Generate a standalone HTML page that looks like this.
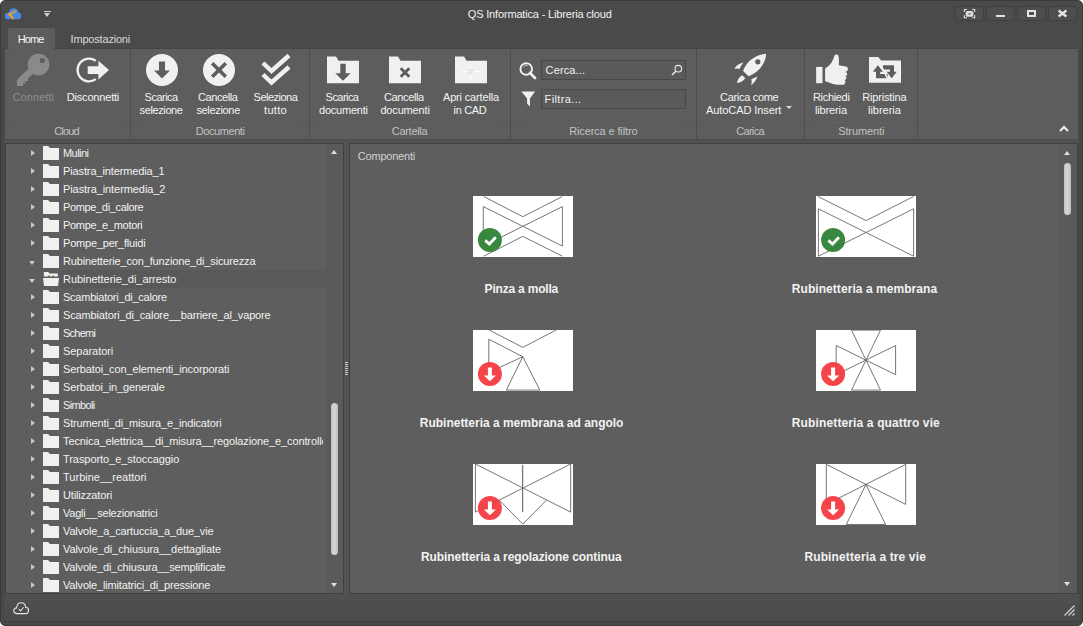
<!DOCTYPE html>
<html><head><meta charset="utf-8">
<style>
*{margin:0;padding:0;box-sizing:border-box}
html,body{width:1083px;height:626px;overflow:hidden;background:#fff}
body{font-family:"Liberation Sans",sans-serif;font-size:11px;color:#f0f0f0;position:relative}
.a{position:absolute}
.t{white-space:nowrap;line-height:13px}
svg{position:absolute;overflow:visible}
#win{left:0;top:0;width:1083px;height:626px;background:linear-gradient(#4a4a4a 0,#4a4a4a 48px,#474747 48px);border:1px solid #3a3a3a;border-radius:5px}
.tb{top:6px;width:29px;height:15px;border:1px solid #404040;border-radius:3px;background:#4e4e4e}
.gsep{top:49px;width:1px;height:90px;background:#4d4d4d}
.lsep{top:121px;height:2px;border-top:1px solid rgba(80,80,80,0.35);background:linear-gradient(90deg,rgba(100,100,100,0),#626262 12%,#626262 88%,rgba(100,100,100,0))}
.glab{top:125px;color:#c2c2c2;text-align:center}
.bl{top:91px;text-align:center;line-height:13px;color:#f4f4f4;white-space:nowrap}
.row{left:0;height:18px;width:320px}
.row .arr{position:absolute;left:31px;top:6px;width:0;height:0;border-top:3.5px solid transparent;border-bottom:3.5px solid transparent;border-left:4px solid #c9c9c9}
.row .arrd{position:absolute;left:29px;top:9px;width:0;height:0;border-left:3.5px solid transparent;border-right:3.5px solid transparent;border-top:4px solid #c9c9c9}
.row .fo{position:absolute;left:43px;top:2px;width:16px;height:14px}
.row .tx{position:absolute;left:63px;top:3px;color:#f2f2f2;white-space:nowrap;line-height:13px}
.item{width:240px;text-align:center}
.thumb{width:100px;height:61px;background:#fff}
.cap{font-weight:bold;font-size:12px;color:#f2f2f2;white-space:nowrap;text-align:center;width:300px}
</style></head><body>
<div id="win" class="a"></div>

<!-- QAT -->
<svg style="left:4px;top:7px" width="18" height="14" viewBox="0 0 18 14">
  <circle cx="9.6" cy="6" r="4.8" fill="#4a86de"/>
  <rect x="0.9" y="5.4" width="16.3" height="6.9" rx="3.4" fill="#4a86de"/>
  <path d="M5.7 7.5 L10 4.8" stroke="#f5a418" stroke-width="1.5" fill="none"/>
  <path d="M5.7 7.5 L9.6 11.8" stroke="#f5a418" stroke-width="1.9" fill="none"/>
  <circle cx="5.7" cy="7.5" r="1.6" fill="#f5a418"/>
  <circle cx="10.9" cy="4.3" r="1.1" fill="none" stroke="#e8a030" stroke-width="0.7"/>
</svg>
<div class="a" style="left:44px;top:11px;width:7px;height:1px;background:#d0d0d0"></div>
<div class="a" style="left:44px;top:13px;width:0;height:0;border-left:3.5px solid transparent;border-right:3.5px solid transparent;border-top:4px solid #d0d0d0"></div>

<!-- title -->


<!-- title buttons -->
<div class="a tb" style="left:955px"></div>
<div class="a tb" style="left:986px"></div>
<div class="a tb" style="left:1017px"></div>
<div class="a tb" style="left:1048px"></div>
<svg style="left:963px;top:8px" width="13" height="11" viewBox="0 0 13 11">
  <path d="M1.4 4 V1.5 H4 M9.2 1.5 H11.7 V4 M11.7 7.2 V9.7 H9.2 M4 9.7 H1.4 V7.2" stroke="#e4e4e4" stroke-width="1.1" fill="none"/>
  <rect x="2.7" y="3.1" width="7.7" height="5.6" rx="1.6" fill="#dedede"/>
  <rect x="5.3" y="5.4" width="2.6" height="1" fill="#4e4e4e"/>
</svg>
<div class="a" style="left:996px;top:15px;width:9px;height:2px;background:#e4e4e4"></div>
<div class="a" style="left:1027px;top:10px;width:9px;height:7px;border:2px solid #e4e4e4;border-radius:0.5px"></div>
<svg style="left:1057px;top:10px" width="11" height="7" viewBox="0 0 11 7">
  <path d="M1.6 0.5 L9.4 6.5 M9.4 0.5 L1.6 6.5" stroke="#e4e4e4" stroke-width="2.4"/>
</svg>

<!-- tabs -->
<div class="a" style="left:8px;top:28px;width:47px;height:22px;background:#5d5d5d;border-radius:2px 2px 0 0"></div>



<!-- ribbon -->
<div class="a" style="left:5px;top:49px;width:1073px;height:90px;background:#5d5d5d"></div>

<div class="a gsep" style="left:130px"></div>
<div class="a gsep" style="left:309px"></div>
<div class="a gsep" style="left:510px"></div>
<div class="a gsep" style="left:696px"></div>
<div class="a gsep" style="left:804px"></div>
<div class="a gsep" style="left:917px"></div>
<div class="a lsep" style="left:6px;width:124px"></div>
<div class="a lsep" style="left:131px;width:178px"></div>
<div class="a lsep" style="left:310px;width:200px"></div>
<div class="a lsep" style="left:511px;width:185px"></div>
<div class="a lsep" style="left:697px;width:107px"></div>
<div class="a lsep" style="left:805px;width:112px"></div>


<!-- Cloud group -->
<svg style="left:16px;top:53px" width="34" height="34" viewBox="0 0 34 34">
  <circle cx="22.5" cy="11.5" r="10.8" fill="#8a8a8a"/>
  <circle cx="26.3" cy="7.5" r="2.6" fill="#5d5d5d"/>
  <path d="M12 16 L1 27 V33 H7 V30.5 H9.5 V28 H12 V25.5 L18 19.5 Z" fill="#8a8a8a"/>
</svg>
<svg style="left:77px;top:56px" width="33" height="28" viewBox="0 0 33 28">
  <path d="M18.8 4.85 A11.4 11.4 0 1 0 18.8 23.15" stroke="#f0f0f0" stroke-width="2.3" fill="none"/>
  <path d="M10.7 10.3 H21.4 V4.7 L32 14.1 L21.4 23.5 V17.9 H10.7 Z" fill="#f0f0f0"/>
</svg>

<!-- Documenti group -->
<svg style="left:146px;top:54px" width="32" height="32" viewBox="0 0 32 32">
  <circle cx="16" cy="16" r="16" fill="#f0f0f0"/>
  <path d="M13 7.5 H19 V16.5 H24 L16 24.5 L8 16.5 H13 Z" fill="#5d5d5d"/>
</svg>
<svg style="left:203px;top:54px" width="32" height="32" viewBox="0 0 32 32">
  <circle cx="16" cy="16" r="16" fill="#f0f0f0"/>
  <path d="M9.2 9.2 L22.8 22.8 M22.8 9.2 L9.2 22.8" stroke="#5d5d5d" stroke-width="3.6"/>
</svg>
<svg style="left:261px;top:54px" width="30" height="32" viewBox="0 0 30 32">
  <path d="M2 9 L10.5 17 L28 1.5 M2 20.5 L10.5 28.5 L28 13" stroke="#f0f0f0" stroke-width="4.4" fill="none"/>
</svg>

<!-- Cartella group -->
<svg style="left:327px;top:56px" width="32" height="28" viewBox="0 0 32 28">
  <path d="M0 0.6 H9 L11.5 4.8 H32 V27.2 H0 Z" fill="#f0f0f0"/>
  <path d="M13.3 7.8 H18.7 V17.3 H23.7 L16 24.7 L8.3 17.3 H13.3 Z" fill="#5d5d5d"/>
</svg>
<svg style="left:389px;top:56px" width="32" height="28" viewBox="0 0 32 28">
  <path d="M0 0.6 H9 L11.5 4.8 H32 V27.2 H0 Z" fill="#f0f0f0"/>
  <path d="M11.7 12.2 L20.3 20.8 M20.3 12.2 L11.7 20.8" stroke="#5d5d5d" stroke-width="2.9"/>
</svg>
<svg style="left:455px;top:56px" width="32" height="28" viewBox="0 0 32 28">
  <path d="M0 0.6 H9 L11.5 4.8 H32 V27.2 H0 Z" fill="#f0f0f0"/>
  <path d="M15.5 9.8 V24.7 M7 15.5 H25" stroke="#ffffff" stroke-width="1.2"/>
  <circle cx="15.5" cy="15.5" r="2.8" fill="#e6e6e6"/>
</svg>

<!-- Ricerca e filtro -->
<svg style="left:519px;top:62px" width="18" height="17" viewBox="0 0 18 17">
  <circle cx="7.2" cy="7" r="5.8" stroke="#f0f0f0" stroke-width="1.9" fill="none"/><path d="M4.5 5 A3.3 3.3 0 0 1 8.5 3.6" stroke="#d8d8d8" stroke-width="0.9" fill="none"/>
  <path d="M11 11 L16 16" stroke="#f0f0f0" stroke-width="2.8" stroke-linecap="round"/>
</svg>
<div class="a" style="left:541px;top:60px;width:145px;height:20px;border:1px solid #484848;background:#5a5a5a"></div>

<svg style="left:671px;top:64px" width="12" height="12" viewBox="0 0 12 12">
  <circle cx="7.3" cy="4.7" r="3.3" stroke="#e8e8e8" stroke-width="1.1" fill="none"/>
  <path d="M4.8 7.2 L1 11" stroke="#e8e8e8" stroke-width="1.5"/>
</svg>
<svg style="left:521px;top:91px" width="15" height="16" viewBox="0 0 15 17">
  <path d="M0 0.5 H14.5 L9 8 V16.5 L6 13.5 V8 Z" fill="#f0f0f0"/>
</svg>
<div class="a" style="left:541px;top:89px;width:145px;height:20px;border:1px solid #484848;background:#5a5a5a"></div>


<!-- Carica -->
<svg style="left:734px;top:53px" width="33" height="33" viewBox="0 0 33 33">
  <path d="M32.1 0.8 C26 1 19 4 14 9.5 C11.5 12.5 9.8 15.5 9.1 18.1 L14.5 23.2 C17.5 22.2 21 20.4 24.5 17 C29.5 12 32 6 32.1 0.8 Z" fill="#f0f0f0"/>
  <circle cx="23.8" cy="8.8" r="2.6" fill="#5d5d5d"/>
  <path d="M0.2 15.6 C2.5 12.5 6 10.3 9.6 9.6 C7.8 11.5 6.6 13.5 5.7 15.7 Z" fill="#f0f0f0"/>
  <path d="M17.1 32.5 C19.8 30.3 22.5 27 23.4 23.3 C21.5 24.6 19.5 25.5 17.4 25.9 C17.9 28 17.7 30.4 17.1 32.5 Z" fill="#f0f0f0"/>
  <path d="M3 30 C3.3 27 5.3 24 8.2 22.3 L11.3 25.2 C9.5 27.8 6.5 29.5 3 30 Z" fill="#f0f0f0"/>
</svg>
<div class="a" style="left:786px;top:106px;width:0;height:0;border-left:3px solid transparent;border-right:3px solid transparent;border-top:3px solid #d8d8d8"></div>

<!-- Strumenti -->
<svg style="left:815px;top:54px" width="34" height="32" viewBox="0 0 34 32">
  <rect x="1.15" y="12.9" width="6.35" height="16.3" fill="#f0f0f0"/>
  <path d="M10.1 14.5 C12.5 13 15 11 16.5 8.5 C18 6 19 3 19.5 1.5 C20 0.3 22.5 -0.2 23.3 1.5 C24.2 3.5 24 8 23.8 11.3 L31 12.5 C33.2 12.9 33.6 16.2 31.8 17.3 L30.3 18 C32.8 18.6 33 21.5 30.2 22 C32 22.6 32 25.5 29.5 25.9 C31 26.7 30.8 30.6 27.6 30.8 C24 30.9 20 30.5 18 29.9 C15.5 29.2 12.5 28 10.1 27.3 Z" fill="#f0f0f0"/>
</svg>
<svg style="left:869px;top:56px" width="32" height="28" viewBox="0 0 32 28">
  <path d="M0 0.9 H9.3 L12.1 4.6 H32 V26.8 H0 Z" fill="#f0f0f0"/>
  <path d="M8.9 9.2 L14 15.7 H11.2 V18 H18.6 V22.2 H7 V15.7 H3.8 Z" fill="#5d5d5d"/>
  <path d="M14 9.2 H25 V15.7 H27.8 L22.7 22.2 L17.6 15.7 H21 V13.4 H14 Z" fill="#5d5d5d"/>
  <path d="M11.2 7.9 L18.6 22.6" stroke="#f0f0f0" stroke-width="1.6"/>
</svg>

<div class="a t" style="left:12.60px;top:91px;color:#8e8e8e;letter-spacing:0.071px">Connetti</div>
<div class="a t" style="left:66.80px;top:91px;color:#f4f4f4;letter-spacing:-0.190px">Disconnetti</div>
<div class="a t" style="left:144.60px;top:91px;color:#f4f4f4;letter-spacing:-0.517px">Scarica</div>
<div class="a t" style="left:139.60px;top:104px;color:#f4f4f4;letter-spacing:-0.388px">selezione</div>
<div class="a t" style="left:198.00px;top:91px;color:#f4f4f4;letter-spacing:-0.414px">Cancella</div>
<div class="a t" style="left:196.40px;top:104px;color:#f4f4f4;letter-spacing:-0.325px">selezione</div>
<div class="a t" style="left:253.60px;top:91px;color:#f4f4f4;letter-spacing:-0.513px">Seleziona</div>
<div class="a t" style="left:264.00px;top:104px;color:#f4f4f4;letter-spacing:0.325px">tutto</div>
<div class="a t" style="left:325.60px;top:91px;color:#f4f4f4;letter-spacing:-0.550px">Scarica</div>
<div class="a t" style="left:319.00px;top:104px;color:#f4f4f4;letter-spacing:-0.225px">documenti</div>
<div class="a t" style="left:384.00px;top:91px;color:#f4f4f4;letter-spacing:-0.371px">Cancella</div>
<div class="a t" style="left:380.40px;top:104px;color:#f4f4f4;letter-spacing:-0.163px">documenti</div>
<div class="a t" style="left:443.00px;top:91px;color:#f4f4f4;letter-spacing:-0.167px">Apri cartella</div>
<div class="a t" style="left:453.60px;top:104px;color:#f4f4f4;letter-spacing:-0.360px">in CAD</div>
<div class="a t" style="left:720.00px;top:91px;color:#f4f4f4;letter-spacing:-0.300px">Carica come</div>
<div class="a t" style="left:706.00px;top:104px;color:#f4f4f4;letter-spacing:-0.077px">AutoCAD Insert</div>
<div class="a t" style="left:813.00px;top:91px;color:#f4f4f4;letter-spacing:-0.329px">Richiedi</div>
<div class="a t" style="left:815.00px;top:104px;color:#f4f4f4;letter-spacing:-0.143px">libreria</div>
<div class="a t" style="left:862.20px;top:91px;color:#f4f4f4;letter-spacing:-0.167px">Ripristina</div>
<div class="a t" style="left:868.00px;top:104px;color:#f4f4f4;letter-spacing:-0.029px">libreria</div>
<div class="a t" style="left:54.20px;top:125px;color:#c2c2c2;letter-spacing:-0.850px">Cloud</div>
<div class="a t" style="left:195.80px;top:125px;color:#c2c2c2;letter-spacing:-0.438px">Documenti</div>
<div class="a t" style="left:391.80px;top:125px;color:#c2c2c2;letter-spacing:-0.300px">Cartella</div>
<div class="a t" style="left:569.20px;top:125px;color:#c2c2c2;letter-spacing:-0.127px">Ricerca e filtro</div>
<div class="a t" style="left:736.20px;top:125px;color:#c2c2c2;letter-spacing:-0.680px">Carica</div>
<div class="a t" style="left:838.20px;top:125px;color:#c2c2c2;letter-spacing:-0.112px">Strumenti</div>
<!-- collapse chevron -->
<svg style="left:1059px;top:125px" width="10" height="7" viewBox="0 0 10 7">
  <path d="M1 6 L5 2 L9 6" stroke="#f0f0f0" stroke-width="2" fill="none"/>
</svg>

<!-- band between ribbon and panels -->
<div class="a" style="left:4px;top:139px;width:1075px;height:4px;background:#525252;border-top:1px solid #4b4b4b"></div>
<div class="a" style="left:5px;top:48px;width:1073px;height:1px;background:#464646"></div>
<div class="a" style="left:9px;top:48px;width:45px;height:1px;background:#5d5d5d"></div>

<!-- TREE PANEL -->
<div class="a" style="left:5px;top:143px;width:339px;height:451px;border:1px solid #404040;background:#5e5e5e;overflow:hidden">
  <div class="a" style="left:320px;top:0;width:18px;height:449px;background:#5a5a5a"></div>
</div>
<div class="a" style="left:60px;top:270px;width:266px;height:18px;background:#595959"></div>
<div class="a" style="left:6px;top:144px;width:317px;height:449px;overflow:hidden">
<div class="a" style="left:-6px;top:-144px;width:1083px;height:626px">
<div class="a row" style="top:144px"><div class="arr"></div><svg class="fo" width="16" height="14" viewBox="0 0 16 14"><path d="M0 0 H5 L7 2 H16 V14 H0 Z" fill="#f0f0f0"/></svg><div class="tx" style="letter-spacing:-0.56px">Mulini</div></div>
<div class="a row" style="top:162px"><div class="arr"></div><svg class="fo" width="16" height="14" viewBox="0 0 16 14"><path d="M0 0 H5 L7 2 H16 V14 H0 Z" fill="#f0f0f0"/></svg><div class="tx" style="letter-spacing:-0.121px">Piastra_intermedia_1</div></div>
<div class="a row" style="top:180px"><div class="arr"></div><svg class="fo" width="16" height="14" viewBox="0 0 16 14"><path d="M0 0 H5 L7 2 H16 V14 H0 Z" fill="#f0f0f0"/></svg><div class="tx" style="letter-spacing:-0.079px">Piastra_intermedia_2</div></div>
<div class="a row" style="top:198px"><div class="arr"></div><svg class="fo" width="16" height="14" viewBox="0 0 16 14"><path d="M0 0 H5 L7 2 H16 V14 H0 Z" fill="#f0f0f0"/></svg><div class="tx" style="letter-spacing:-0.35px">Pompe_di_calore</div></div>
<div class="a row" style="top:216px"><div class="arr"></div><svg class="fo" width="16" height="14" viewBox="0 0 16 14"><path d="M0 0 H5 L7 2 H16 V14 H0 Z" fill="#f0f0f0"/></svg><div class="tx" style="letter-spacing:-0.308px">Pompe_e_motori</div></div>
<div class="a row" style="top:234px"><div class="arr"></div><svg class="fo" width="16" height="14" viewBox="0 0 16 14"><path d="M0 0 H5 L7 2 H16 V14 H0 Z" fill="#f0f0f0"/></svg><div class="tx" style="letter-spacing:-0.2px">Pompe_per_fluidi</div></div>
<div class="a row" style="top:252px"><div class="arrd"></div><svg class="fo" width="16" height="14" viewBox="0 0 16 14"><path d="M0 0 H5 L7 2 H16 V14 H0 Z" fill="#f0f0f0"/></svg><div class="tx" style="letter-spacing:-0.151px">Rubinetterie_con_funzione_di_sicurezza</div></div>
<div class="a row" style="top:270px"><div class="arrd"></div><svg class="fo" width="16" height="14" viewBox="0 0 16 14"><path d="M0.9 0 H5.1 L6.5 1.4 H14.9 V4.6 H11 L10 3 L9 4.6 H7 L6 3 L5 4.6 H0.9 Z" fill="#f0f0f0"/><path d="M0 6 H16 L15 13.9 H1 Z" fill="#f0f0f0"/></svg><div class="tx" style="letter-spacing:-0.045px">Rubinetterie_di_arresto</div></div>
<div class="a row" style="top:288px"><div class="arr"></div><svg class="fo" width="16" height="14" viewBox="0 0 16 14"><path d="M0 0 H5 L7 2 H16 V14 H0 Z" fill="#f0f0f0"/></svg><div class="tx" style="letter-spacing:-0.235px">Scambiatori_di_calore</div></div>
<div class="a row" style="top:306px"><div class="arr"></div><svg class="fo" width="16" height="14" viewBox="0 0 16 14"><path d="M0 0 H5 L7 2 H16 V14 H0 Z" fill="#f0f0f0"/></svg><div class="tx" style="letter-spacing:-0.142px">Scambiatori_di_calore__barriere_al_vapore</div></div>
<div class="a row" style="top:324px"><div class="arr"></div><svg class="fo" width="16" height="14" viewBox="0 0 16 14"><path d="M0 0 H5 L7 2 H16 V14 H0 Z" fill="#f0f0f0"/></svg><div class="tx" style="letter-spacing:-0.74px">Schemi</div></div>
<div class="a row" style="top:342px"><div class="arr"></div><svg class="fo" width="16" height="14" viewBox="0 0 16 14"><path d="M0 0 H5 L7 2 H16 V14 H0 Z" fill="#f0f0f0"/></svg><div class="tx" style="letter-spacing:-0.056px">Separatori</div></div>
<div class="a row" style="top:360px"><div class="arr"></div><svg class="fo" width="16" height="14" viewBox="0 0 16 14"><path d="M0 0 H5 L7 2 H16 V14 H0 Z" fill="#f0f0f0"/></svg><div class="tx" style="letter-spacing:-0.112px">Serbatoi_con_elementi_incorporati</div></div>
<div class="a row" style="top:378px"><div class="arr"></div><svg class="fo" width="16" height="14" viewBox="0 0 16 14"><path d="M0 0 H5 L7 2 H16 V14 H0 Z" fill="#f0f0f0"/></svg><div class="tx" style="letter-spacing:-0.147px">Serbatoi_in_generale</div></div>
<div class="a row" style="top:396px"><div class="arr"></div><svg class="fo" width="16" height="14" viewBox="0 0 16 14"><path d="M0 0 H5 L7 2 H16 V14 H0 Z" fill="#f0f0f0"/></svg><div class="tx" style="letter-spacing:-0.633px">Simboli</div></div>
<div class="a row" style="top:414px"><div class="arr"></div><svg class="fo" width="16" height="14" viewBox="0 0 16 14"><path d="M0 0 H5 L7 2 H16 V14 H0 Z" fill="#f0f0f0"/></svg><div class="tx" style="letter-spacing:-0.148px">Strumenti_di_misura_e_indicatori</div></div>
<div class="a row" style="top:432px"><div class="arr"></div><svg class="fo" width="16" height="14" viewBox="0 0 16 14"><path d="M0 0 H5 L7 2 H16 V14 H0 Z" fill="#f0f0f0"/></svg><div class="tx" style="letter-spacing:-0.12px">Tecnica_elettrica__di_misura__regolazione_e_controllo</div></div>
<div class="a row" style="top:450px"><div class="arr"></div><svg class="fo" width="16" height="14" viewBox="0 0 16 14"><path d="M0 0 H5 L7 2 H16 V14 H0 Z" fill="#f0f0f0"/></svg><div class="tx" style="letter-spacing:-0.062px">Trasporto_e_stoccaggio</div></div>
<div class="a row" style="top:468px"><div class="arr"></div><svg class="fo" width="16" height="14" viewBox="0 0 16 14"><path d="M0 0 H5 L7 2 H16 V14 H0 Z" fill="#f0f0f0"/></svg><div class="tx" style="letter-spacing:0.012px">Turbine__reattori</div></div>
<div class="a row" style="top:486px"><div class="arr"></div><svg class="fo" width="16" height="14" viewBox="0 0 16 14"><path d="M0 0 H5 L7 2 H16 V14 H0 Z" fill="#f0f0f0"/></svg><div class="tx" style="letter-spacing:-0.145px">Utilizzatori</div></div>
<div class="a row" style="top:504px"><div class="arr"></div><svg class="fo" width="16" height="14" viewBox="0 0 16 14"><path d="M0 0 H5 L7 2 H16 V14 H0 Z" fill="#f0f0f0"/></svg><div class="tx" style="letter-spacing:-0.235px">Vagli__selezionatrici</div></div>
<div class="a row" style="top:522px"><div class="arr"></div><svg class="fo" width="16" height="14" viewBox="0 0 16 14"><path d="M0 0 H5 L7 2 H16 V14 H0 Z" fill="#f0f0f0"/></svg><div class="tx" style="letter-spacing:-0.139px">Valvole_a_cartuccia_a_due_vie</div></div>
<div class="a row" style="top:540px"><div class="arr"></div><svg class="fo" width="16" height="14" viewBox="0 0 16 14"><path d="M0 0 H5 L7 2 H16 V14 H0 Z" fill="#f0f0f0"/></svg><div class="tx" style="letter-spacing:-0.084px">Valvole_di_chiusura__dettagliate</div></div>
<div class="a row" style="top:558px"><div class="arr"></div><svg class="fo" width="16" height="14" viewBox="0 0 16 14"><path d="M0 0 H5 L7 2 H16 V14 H0 Z" fill="#f0f0f0"/></svg><div class="tx" style="letter-spacing:-0.172px">Valvole_di_chiusura__semplificate</div></div>
<div class="a row" style="top:576px"><div class="arr"></div><svg class="fo" width="16" height="14" viewBox="0 0 16 14"><path d="M0 0 H5 L7 2 H16 V14 H0 Z" fill="#f0f0f0"/></svg><div class="tx" style="letter-spacing:-0.171px">Valvole_limitatrici_di_pressione</div></div>
</div></div>
<!-- splitter -->
<div class="a" style="left:344px;top:143px;width:5px;height:451px;background:#535353"></div>

<!-- CONTENT PANEL -->
<div class="a" style="left:349px;top:143px;width:729px;height:451px;border:1px solid #404040;background:#5e5e5e"></div>

<div class="a" style="left:350px;top:166px;width:709px;height:1px;background:#626262"></div>
<div class="a" style="left:1059px;top:144px;width:18px;height:449px;background:#5a5a5a"></div>
<div class="a thumb" style="left:473px;top:196px"></div><svg style="left:473px;top:196px;overflow:hidden" width="100" height="61" viewBox="0 0 100 61"><path d="M10.7 0.5 L49.8 20.7 L89.4 0.5 M10.3 10.6 V50.1 L89.4 10.6 V50.1 Z M10.7 60.2 L49.8 40.4 L89.4 60.2" stroke="#666" stroke-width="0.9" fill="none"/><circle cx="16.9" cy="44" r="12" fill="#2e8236" fill-opacity="0.95"/><path d="M12.2 44.4 L16.299999999999997 48 L22.799999999999997 41.2" stroke="#fff" stroke-width="2.8" fill="none"/></svg>
<div class="a t" style="left:484.60px;top:283px;font-weight:bold;font-size:12px;color:#f2f2f2;letter-spacing:-0.200px">Pinza a molla</div>
<div class="a thumb" style="left:816px;top:196px"></div><svg style="left:816px;top:196px;overflow:hidden" width="100" height="61" viewBox="0 0 100 61"><path d="M2 0.5 L50.1 24.6 L97.6 0.5 M2.4 12.8 V60.2 L97.6 12.8 V60.2 Z" stroke="#666" stroke-width="0.9" fill="none"/><circle cx="17.1" cy="44" r="12" fill="#2e8236" fill-opacity="0.95"/><path d="M12.400000000000002 44.4 L16.5 48 L23.0 41.2" stroke="#fff" stroke-width="2.8" fill="none"/></svg>
<div class="a t" style="left:791.80px;top:283px;font-weight:bold;font-size:12px;color:#f2f2f2;letter-spacing:0.059px">Rubinetteria a membrana</div>
<div class="a thumb" style="left:473px;top:330px"></div><svg style="left:473px;top:330px;overflow:hidden" width="100" height="61" viewBox="0 0 100 61"><path d="M15.8 -0.2 L49.8 17.4 L83.6 -0.2 M15.8 9.2 V42.5 L49.8 26.7 Z M49.8 26.7 L33.3 60.1 H66.8 Z" stroke="#666" stroke-width="0.9" fill="none"/><circle cx="16.9" cy="44" r="12" fill="#f43a40" fill-opacity="0.95"/><path d="M14.899999999999999 37.5 H18.9 V45.4 H22.9 L16.9 51.2 L10.899999999999999 45.4 H14.899999999999999 Z" fill="#fff"/></svg>
<div class="a t" style="left:419.80px;top:417px;font-weight:bold;font-size:12px;color:#f2f2f2;letter-spacing:-0.013px">Rubinetteria a membrana ad angolo</div>
<div class="a thumb" style="left:816px;top:330px"></div><svg style="left:816px;top:330px;overflow:hidden" width="100" height="61" viewBox="0 0 100 61"><path d="M20.2 15.5 V44.7 L79.6 15.5 V44.7 Z M35.5 0.1 H64.5 L35.5 60.1 H64.5 Z" stroke="#666" stroke-width="0.9" fill="none"/><circle cx="17.1" cy="44" r="12" fill="#f43a40" fill-opacity="0.95"/><path d="M15.100000000000001 37.5 H19.1 V45.4 H23.1 L17.1 51.2 L11.100000000000001 45.4 H15.100000000000001 Z" fill="#fff"/></svg>
<div class="a t" style="left:791.80px;top:417px;font-weight:bold;font-size:12px;color:#f2f2f2;letter-spacing:0.132px">Rubinetteria a quattro vie</div>
<div class="a thumb" style="left:473px;top:464px"></div><svg style="left:473px;top:464px;overflow:hidden" width="100" height="61" viewBox="0 0 100 61"><path d="M2.4 0 V48.1 L97.7 0 V48.1 Z M26.5 36.3 L49.8 60.1 L73.3 36.3" stroke="#666" stroke-width="0.9" fill="none"/><path d="M49.6 1.1 V48.1" stroke="#777" stroke-width="1.3"/><circle cx="16.9" cy="44" r="12" fill="#f43a40" fill-opacity="0.95"/><path d="M14.899999999999999 37.5 H18.9 V45.4 H22.9 L16.9 51.2 L10.899999999999999 45.4 H14.899999999999999 Z" fill="#fff"/></svg>
<div class="a t" style="left:421.00px;top:551px;font-weight:bold;font-size:12px;color:#f2f2f2;letter-spacing:-0.082px">Rubinetteria a regolazione continua</div>
<div class="a thumb" style="left:816px;top:464px"></div><svg style="left:816px;top:464px;overflow:hidden" width="100" height="61" viewBox="0 0 100 61"><path d="M10.3 0.4 V40.4 L89.7 0.4 V40.4 Z M49.9 20.5 L30.3 60.5 H69.6 Z" stroke="#666" stroke-width="0.9" fill="none"/><circle cx="17.1" cy="44" r="12" fill="#f43a40" fill-opacity="0.95"/><path d="M15.100000000000001 37.5 H19.1 V45.4 H23.1 L17.1 51.2 L11.100000000000001 45.4 H15.100000000000001 Z" fill="#fff"/></svg>
<div class="a t" style="left:804.40px;top:551px;font-weight:bold;font-size:12px;color:#f2f2f2;letter-spacing:0.129px">Rubinetteria a tre vie</div>

<!-- tree scrollbar -->
<div class="a" style="left:331px;top:150px;width:0;height:0;border-left:3.5px solid transparent;border-right:3.5px solid transparent;border-bottom:4px solid #e0e0e0"></div>
<div class="a" style="left:331px;top:583px;width:0;height:0;border-left:3.5px solid transparent;border-right:3.5px solid transparent;border-top:4px solid #e0e0e0"></div>
<div class="a" style="left:331px;top:403px;width:7px;height:152px;border-radius:3.5px;background:linear-gradient(90deg,#c4c4c4,#d6d6d6 50%,#bdbdbd)"></div>
<!-- content scrollbar -->
<div class="a" style="left:1064px;top:151px;width:0;height:0;border-left:3.5px solid transparent;border-right:3.5px solid transparent;border-bottom:4px solid #e0e0e0"></div>
<div class="a" style="left:1064px;top:582px;width:0;height:0;border-left:3.5px solid transparent;border-right:3.5px solid transparent;border-top:4px solid #e0e0e0"></div>
<div class="a" style="left:1064px;top:163px;width:7px;height:52px;border-radius:3.5px;background:linear-gradient(90deg,#c4c4c4,#d6d6d6 50%,#bdbdbd)"></div>
<!-- splitter grip -->
<div class="a" style="left:345px;top:362px;width:3px;height:1px;background:#d4d4d4;border-radius:1px"></div><div class="a" style="left:345px;top:364px;width:3px;height:1px;background:#d4d4d4;border-radius:1px"></div><div class="a" style="left:345px;top:366px;width:3px;height:1px;background:#d4d4d4;border-radius:1px"></div><div class="a" style="left:345px;top:368px;width:3px;height:1px;background:#d4d4d4;border-radius:1px"></div><div class="a" style="left:345px;top:370px;width:3px;height:1px;background:#d4d4d4;border-radius:1px"></div><div class="a" style="left:345px;top:372px;width:3px;height:1px;background:#d4d4d4;border-radius:1px"></div><div class="a" style="left:345px;top:374px;width:3px;height:1px;background:#d4d4d4;border-radius:1px"></div>
<!-- status bar -->
<div class="a" style="left:4px;top:594px;width:1075px;height:28px;background:linear-gradient(#505050,#4a4a4a);border-bottom:1px solid #404040"></div>

<svg style="left:13px;top:602px" width="16.3" height="12.3" viewBox="0 0 17 13">
  <path d="M4 12.3 C2 12.3 0.7 10.9 0.7 9.2 C0.7 7.5 2 6.2 3.7 6.2 C3.9 3 6 0.8 8.5 0.8 C11 0.8 13 2.8 13.2 5.6 C15 5.7 16.3 7.2 16.3 9 C16.3 10.9 14.9 12.3 13 12.3 Z" stroke="#e8e8e8" stroke-width="1.2" fill="none"/>
  <path d="M6 7.5 L8 9.5 L11 5.5" stroke="#e8e8e8" stroke-width="1.1" fill="none"/>
</svg>
<svg style="left:1064px;top:605px" width="11" height="11" viewBox="0 0 11 11">
  <path d="M0.5 10.5 L10.5 0.5 M4.5 10.5 L10.5 4.5 M8.5 10.5 L10.5 8.5" stroke="#d8d8d8" stroke-width="1.1"/>
</svg>
<div class="a t" style="left:467.80px;top:8px;color:#f2f2f2;letter-spacing:-0.170px">QS Informatica - Libreria cloud</div>
<div class="a t" style="left:17.80px;top:33px;color:#f8f8f8;letter-spacing:-0.933px">Home</div>
<div class="a t" style="left:70.60px;top:33px;color:#dadada;letter-spacing:-0.191px">Impostazioni</div>
<div class="a t" style="left:545.60px;top:64px;color:#f2f2f2;letter-spacing:0.129px">Cerca...</div>
<div class="a t" style="left:544.60px;top:93px;color:#f2f2f2;letter-spacing:0.363px">Filtra...</div>
<div class="a t" style="left:357.80px;top:150px;color:#d2d2d2;letter-spacing:-0.211px">Componenti</div>
</body></html>
